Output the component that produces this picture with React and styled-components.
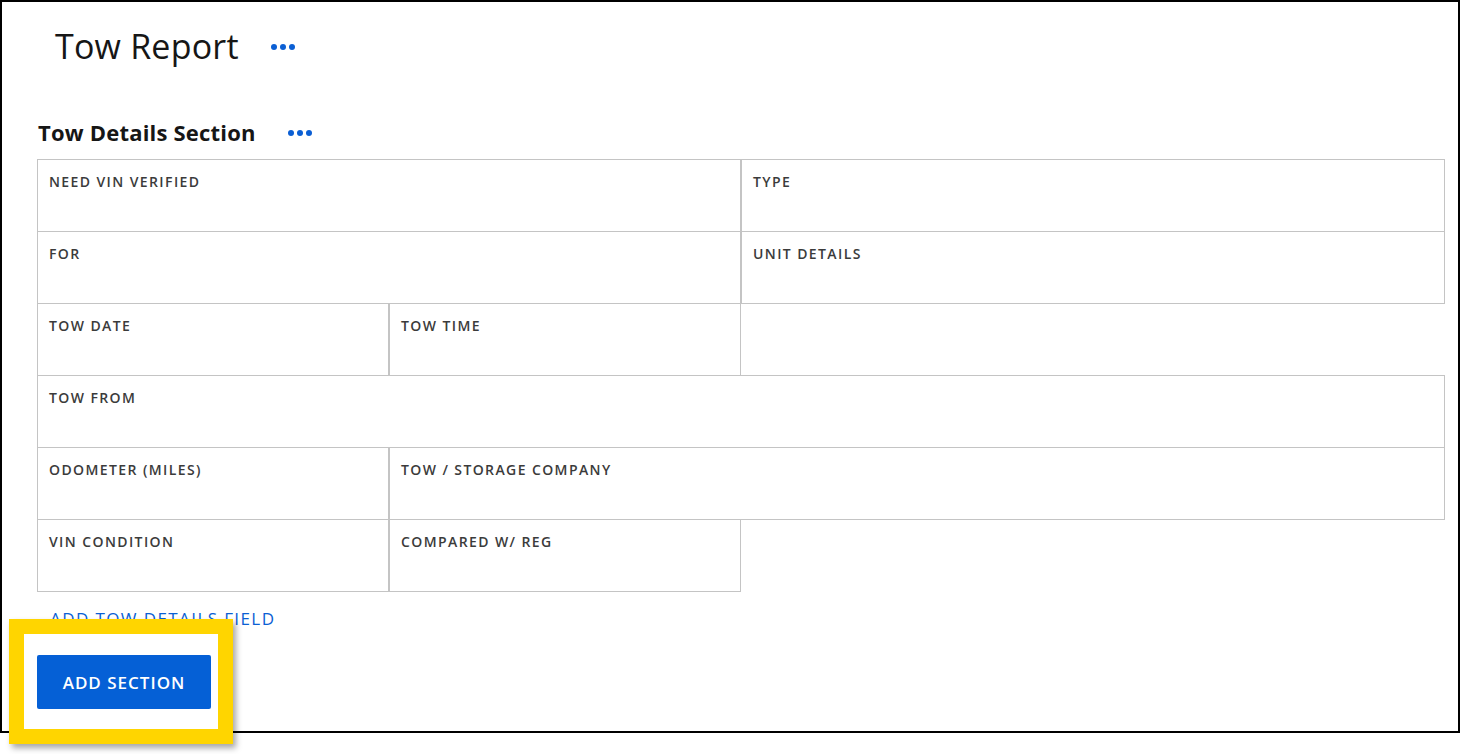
import React from 'react';
import styled, { createGlobalStyle } from 'styled-components';

const GlobalStyle = createGlobalStyle`
  html, body {
    margin: 0;
    padding: 0;
    background: #ffffff;
  }
  body {
    font-family: "Open Sans", "Liberation Sans", sans-serif;
    color: #161616;
  }
`;

const fields = [
  { label: 'NEED VIN VERIFIED', span: 2 },
  { label: 'TYPE', span: 2 },
  { label: 'FOR', span: 2 },
  { label: 'UNIT DETAILS', span: 2 },
  { label: 'TOW DATE', span: 1 },
  { label: 'TOW TIME', span: 1 },
  { label: null, span: 2 },
  { label: 'TOW FROM', span: 4 },
  { label: 'ODOMETER (MILES)', span: 1 },
  { label: 'TOW / STORAGE COMPANY', span: 3 },
  { label: 'VIN CONDITION', span: 1 },
  { label: 'COMPARED W/ REG', span: 1 },
];

const App = () => {
  return (
    <Page>
      <GlobalStyle />
      <Frame>
        <TitleRow>
          <Title>Tow Report</Title>
          <MoreDots />
        </TitleRow>

        <SectionHeader>
          <SectionTitle>Tow Details Section</SectionTitle>
          <MoreDots />
        </SectionHeader>

        <FieldGrid>
          {fields.map((f, i) =>
            f.label ? (
              <Cell key={i} $span={f.span}>
                <Label>{f.label}</Label>
              </Cell>
            ) : (
              <Spacer key={i} $span={f.span} />
            )
          )}
        </FieldGrid>

        <AddFieldLink>ADD TOW DETAILS FIELD</AddFieldLink>

        <PrimaryButton>ADD SECTION</PrimaryButton>
      </Frame>

      <Highlight />
    </Page>
  );
};

const MoreDots = () => (
  <DotsButton aria-label="More">
    <svg width="26" height="8" viewBox="0 0 26 8">
      <circle cx="4" cy="4" r="3" fill="#0b5fd4" />
      <circle cx="13" cy="4" r="3" fill="#0b5fd4" />
      <circle cx="22" cy="4" r="3" fill="#0b5fd4" />
    </svg>
  </DotsButton>
);

// Styled Components
const Page = styled.div`
  position: relative;
  width: 1460px;
  height: 754px;
  overflow: hidden;
`;

const Frame = styled.div`
  box-sizing: border-box;
  width: 1460px;
  height: 733px;
  border: 2px solid #000;
  padding: 20px 0 0 35px;
`;

const TitleRow = styled.div`
  display: flex;
  align-items: center;
  gap: 31px;
  padding-left: 18px;
  height: 48px;
`;

const Title = styled.h1`
  margin: 0;
  font-size: 34px;
  font-weight: 400;
  letter-spacing: 0.2px;
  color: #161616;
`;

const DotsButton = styled.span`
  display: inline-flex;
  align-items: center;
  padding-top: 2px;
`;

const SectionHeader = styled.div`
  display: flex;
  align-items: center;
  gap: 31px;
  margin-top: 47px;
  height: 30px;
  padding-left: 1px;
`;

const SectionTitle = styled.h2`
  margin: 0;
  font-size: 22px;
  font-weight: 700;
  letter-spacing: 0.2px;
  color: #161616;
`;

const FieldGrid = styled.div`
  display: grid;
  grid-template-columns: repeat(4, 1fr);
  grid-auto-rows: 72px;
  width: 1408px;
  margin-top: 13px;
`;

const Cell = styled.div`
  grid-column: span ${p => p.$span};
  box-sizing: border-box;
  border: 1px solid #c4c4c4;
  margin-top: -1px;
  height: 73px;
  padding: 12px 11px;
`;

const Spacer = styled.div`
  grid-column: span ${p => p.$span};
`;

const Label = styled.div`
  font-size: 14px;
  font-weight: 600;
  letter-spacing: 1.4px;
  color: #3b3b3b;
`;

const AddFieldLink = styled.div`
  margin: 15px 0 0 13px;
  font-size: 17px;
  font-weight: 500;
  letter-spacing: 1.4px;
  color: #0b5fd4;
`;

const PrimaryButton = styled.button`
  display: block;
  margin-top: 25px;
  width: 174px;
  height: 54px;
  border: none;
  border-radius: 2px;
  background: #0560d6;
  color: #ffffff;
  font-family: "Open Sans", "Liberation Sans", sans-serif;
  font-size: 17px;
  font-weight: 600;
  letter-spacing: 1px;
  cursor: pointer;
`;

const Highlight = styled.div`
  position: absolute;
  left: 9px;
  top: 619px;
  width: 224px;
  height: 125px;
  box-sizing: border-box;
  border: 15px solid #ffd500;
  box-shadow: 3px 4px 6px rgba(0, 0, 0, 0.35);
  pointer-events: none;
`;

export default App;
